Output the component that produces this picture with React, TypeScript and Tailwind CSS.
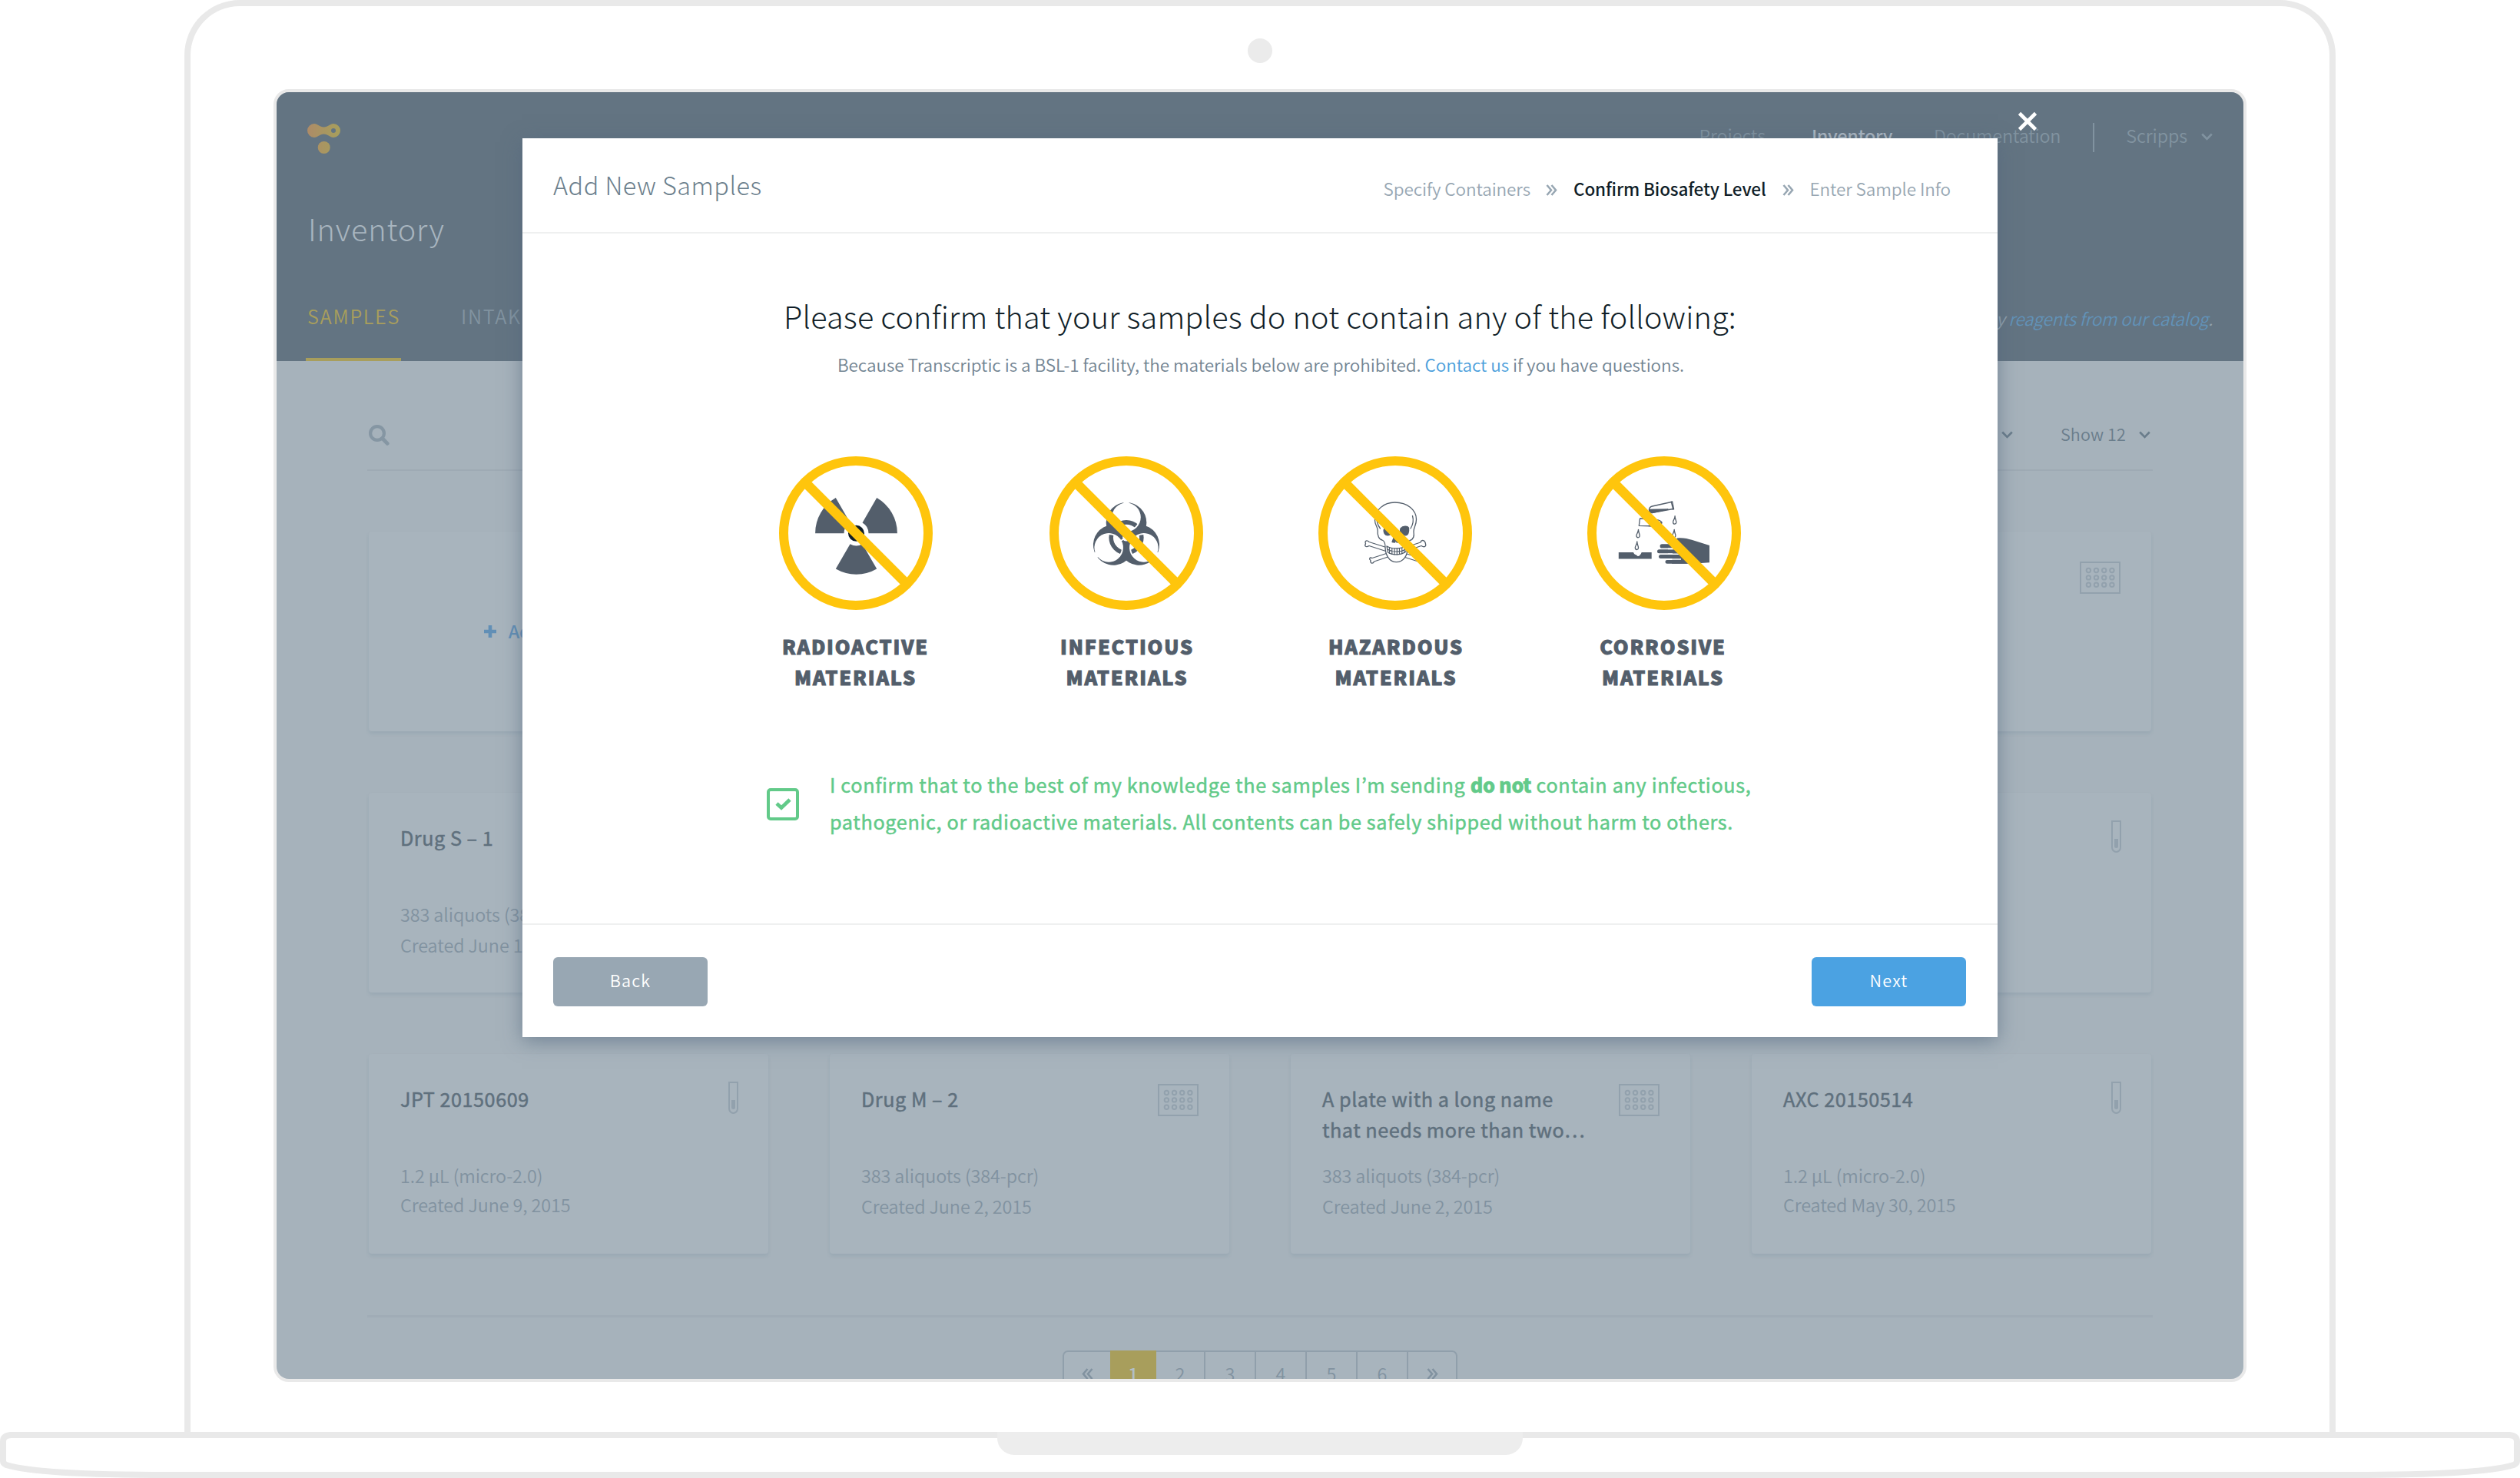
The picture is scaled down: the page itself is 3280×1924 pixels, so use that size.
import type { ReactNode } from "react";

const INK = "#535e6b";

function Logo() {
  return (
    <svg className="h-[40px] w-[44px]" viewBox="0 0 44 40">
      <defs>
        <linearGradient id="logo" gradientUnits="userSpaceOnUse" x1="0" y1="0" x2="44" y2="0">
          <stop offset="0" stopColor="#ad8b68" />
          <stop offset="0.5" stopColor="#a99661" />
          <stop offset="1" stopColor="#a79f5c" />
        </linearGradient>
      </defs>
      <path
        fill="url(#logo)"
        fillRule="evenodd"
        d="M9 1C13.500 1 16 5.500 21.500 5.500S29.500 1 34 1A9 9 0 0 1 34 19C29.500 19 27 14.500 21.500 14.500S13.500 19 9 19A9 9 0 0 1 9 1ZM34 7A3 3 0 1 0 34 13A3 3 0 1 0 34 7Z"
      />
      <circle cx="21.700" cy="32" r="8" fill="url(#logo)" />
    </svg>
  );
}

function ChevronDown({ className }: { className: string }) {
  return (
    <svg className={className} viewBox="0 0 15 10" fill="none" stroke="currentColor" strokeWidth="2.600">
      <path d="M1.200 1.500L7.500 8L13.800 1.500" />
    </svg>
  );
}

function DoubleChevron({ className }: { className: string }) {
  return (
    <svg className={className} viewBox="0 0 15 15" fill="none" stroke="currentColor" strokeWidth="2.600">
      <path d="M1.500 1L7 7.500L1.500 14M7.500 1L13 7.500L7.500 14" />
    </svg>
  );
}

function SearchIcon() {
  return (
    <svg className="mt-[4px] h-[27px] w-[27px] text-[#8596a3]" viewBox="0 0 27 27" fill="none" stroke="currentColor">
      <circle cx="11" cy="11" r="8.900" strokeWidth="4.200" />
      <path d="M18 18L24.200 24.400" strokeWidth="4.800" strokeLinecap="round" />
    </svg>
  );
}

function PlateIcon() {
  return (
    <svg className="mt-[39px] h-[42px] w-[53px] shrink-0 text-[#92a1ad]" viewBox="0 0 53 42" fill="none" stroke="currentColor" strokeWidth="2">
      <rect x="1" y="1" width="51" height="40" />
      {[11.5, 20.9, 30.2].map((y) =>
        [11.4, 21.5, 31.7, 41.9].map((x) => <circle key={`${x}-${y}`} cx={x} cy={y} r="2.700" />),
      )}
    </svg>
  );
}

function TubeIcon() {
  return (
    <svg className="mt-[36px] mr-[-2px] h-[42px] w-[14px] shrink-0 text-[#92a1ad]" viewBox="0 0 14 42">
      <path d="M1 1H12V35A5.500 6 0 0 1 1 35Z" fill="none" stroke="currentColor" strokeWidth="2" />
      <path d="M4 24H9V33.500A2.500 2.500 0 0 1 4 33.500Z" fill="currentColor" />
    </svg>
  );
}

function Radioactive() {
  return (
    <g transform="translate(100.500 100.300)">
      {[0, 120, 240].map((a) => (
        <path key={a} transform={`rotate(${a})`} fill={INK} d="M-8 13.860L-26.700 46.250A53.400 53.400 0 0 0 26.700 46.250L8 13.860A16 16 0 0 1 -8 13.860Z" />
      ))}
      <circle r="10.500" fill="#101e28" />
    </g>
  );
}

function Biohazard() {
  const turns = [0, 120, 240];
  return (
    <g transform="translate(100 105.700) scale(1.755)">
      <defs>
        <mask id="lobes" maskUnits="userSpaceOnUse" x="-30" y="-30" width="60" height="60">
          {turns.map((a) => (
            <circle key={a} transform={`rotate(${a})`} cy="-11" r="15" fill="white" />
          ))}
          {turns.map((a) => (
            <g key={a} transform={`rotate(${a})`} fill="black">
              <circle cy="-15" r="10.700" />
              <rect x="-2" y="-27" width="4" height="6" />
              <rect x="-0.500" y="-6" width="1" height="6" />
            </g>
          ))}
          <circle r="2.800" fill="black" />
        </mask>
        <mask id="ring" maskUnits="userSpaceOnUse" x="-30" y="-30" width="60" height="60">
          {turns.map((a) => (
            <circle key={a} transform={`rotate(${a})`} cy="-15" r="9.600" fill="white" />
          ))}
        </mask>
      </defs>
      <rect x="-30" y="-30" width="60" height="60" fill={INK} mask="url(#lobes)" />
      <circle r="11.300" fill="none" stroke={INK} strokeWidth="3.200" mask="url(#ring)" />
    </g>
  );
}

function Skull() {
  return (
    <g fill="white" stroke={INK} strokeWidth="1.300" strokeLinejoin="round" strokeLinecap="round">
      <path d="M66 116.500C62 119 59.500 117 61.500 113.800C60 110 63 108.500 66 111.500L134 133C138 131.500 140 134 137.500 136.500C138.500 139.500 135 140.500 133 138L66 116.500Z" />
      <path d="M70 132.500C66.500 131 65.500 133.500 68 135.500C67 139.500 71 140.500 72.500 137L134 116.500C138 119 140.500 117.500 139.500 114C139 109 134 108 133 112L70 132.500Z" />
      <path d="M99.500 60C85 60 73.500 70 73.500 83C73.500 90 77.500 92 77.200 97C76.500 103 79 108.500 83 109C86 110 87 113 87 118C87 128 92 137.700 101.500 137.700C111 137.700 116 129 116 120C116 114 115.500 111 119 109.500C123.500 108.500 125 104 124 98C124 92 127.500 90 127.500 82C127.500 70 116 60 99.500 60Z" />
      <path fill="none" d="M122.500 77.500C124.500 84 123 89 120 94M76.500 80C75.500 86 77.500 90 80.500 94" />
      <path fill={INK} d="M86 94C89 92.500 94.500 94 95 98C95.500 102 91 103.500 88 102.500C85 101 84.500 96 86 94Z" />
      <path fill={INK} d="M107 94C110 90.500 116 90.500 117.500 93C118 98 117 102.500 113.500 102.800C109 103 105.500 99 107 94Z" />
      <path fill={INK} d="M98.500 105L96 111.500L99.500 112L100.500 109.500L102 112L105.500 111.500L103 105Z" />
      <path d="M89 117C96 121 107 121 115 116.500L114 124C107 129 96 129 90.500 125Z" />
      <path fill="none" strokeWidth="1.200" d="M90 121.200C97 125 107 125 114.500 120.700M92.500 118.500V126.500M95.800 119.500V127.300M99 120V128M102.300 120V128M105.500 119.800V127.500M108.800 119.200V126.700M112 118V125" />
    </g>
  );
}

function Corrosive() {
  return (
    <g fill="none" stroke={INK} strokeWidth="1.300" strokeLinejoin="round">
      <path d="M109.400 59.500L111.500 68.500L84 73.500C79.500 73 79 66.500 84.500 65Z" />
      <path d="M108.600 59.300L110.600 59L112.600 68.800L110.600 69.200" />
      <path fill={INK} d="M80.500 69.500L105 69L84 73.500C82 73.200 81 72 80.500 69.500Z" />
      <path d="M68.500 81L67.300 90.300L90 91C98 91 99 84.500 92 82.800Z" />
      <path fill={INK} d="M80 90.500L97 86C96 90 93 91 90 91Z" />
      {[
        [113.6, 77.7],
        [112.7, 95.3],
        [66, 95.3],
        [64.3, 111],
      ].map(([x, y]) => (
        <path key={`${x}-${y}`} transform={`translate(${x} ${y})`} d="M0.500 0C0.500 4 -2 5.500 -2 8C-2 11.300 2.200 11.300 2.200 8C2.200 5.500 0.500 4 0.500 0Z" />
      ))}
      <g fill={INK} stroke="none">
        <path d="M40.800 125H60C61 128.500 64 127.500 65.500 130C67.500 130.500 69.500 128 70.700 125H83.700V133.500H40.800Z" />
        <path d="M117 106.500C124 105.500 131 107.500 136 108.700L159 116V138.300L137 139.700H110L112 112Z" />
        <rect x="94.600" y="114.300" width="32" height="5.200" rx="2.600" />
        <rect x="91" y="121.300" width="34" height="5" rx="2.500" />
        <rect x="93" y="128" width="34" height="5" rx="2.500" />
        <rect x="101.500" y="135" width="30" height="4.800" rx="2.400" />
      </g>
      <path stroke="white" strokeWidth="1.600" d="M105 120.400H120M105 127.200H120M105 134H122" />
    </g>
  );
}

function Prohibited({ children }: { children: ReactNode }) {
  return (
    <svg className="h-[200px] w-[200px]" viewBox="0 0 200 200">
      {children}
      <g fill="none" stroke="#ffc50c" strokeWidth="12">
        <circle cx="100" cy="100" r="94" />
        <path d="M34 34L166 166" strokeWidth="12.500" />
      </g>
    </svg>
  );
}

type Sample = { title: string; amount: string; created: string; kind: "plate" | "tube" | "none" };

function SampleCard({ title, amount, created, kind }: Sample) {
  return (
    <div className="flex justify-between rounded-[4px] bg-[#a8b4bd] pr-[40px] pl-[41px] shadow-[0_3px_4px_rgba(110,135,155,0.22)]">
      <div className="w-[360px] pt-[38px] whitespace-pre-line">
        <h3 className="h-[100px] text-[25.2px] leading-[40px] font-normal tracking-[0.53px] text-[#5f707d] [-webkit-text-stroke:0.5px_#5f707d]">{title}</h3>
        <div className={kind === "tube" ? "mt-px text-[23.4px] leading-[38px] font-[350] tracking-[-0.12px] text-[#8192a0]" : "text-[23.4px] leading-[40px] font-[350] tracking-[-0.1px] text-[#8192a0]"}>
          <p>{amount}</p>
          <p>{created}</p>
        </div>
      </div>
      {kind === "plate" && <PlateIcon />}
      {kind === "tube" && <TubeIcon />}
    </div>
  );
}

const samples: Sample[] = [
  { title: "", amount: "", created: "", kind: "none" },
  { title: "", amount: "", created: "", kind: "none" },
  { title: "", amount: "", created: "", kind: "plate" },
  { title: "Drug S – 1", amount: "383 aliquots (384-pcr)", created: "Created June 19, 2015", kind: "none" },
  { title: "", amount: "", created: "", kind: "none" },
  { title: "", amount: "", created: "", kind: "none" },
  { title: "", amount: "", created: "", kind: "tube" },
  { title: "JPT 20150609", amount: "1.2 µL (micro-2.0)", created: "Created June 9, 2015", kind: "tube" },
  { title: "Drug M – 2", amount: "383 aliquots (384-pcr)", created: "Created June 2, 2015", kind: "plate" },
  { title: "A plate with a long name\nthat needs more than two…", amount: "383 aliquots (384-pcr)", created: "Created June 2, 2015", kind: "plate" },
  { title: "AXC 20150514", amount: "1.2 µL (micro-2.0)", created: "Created May 30, 2015", kind: "tube" },
];

function Header() {
  return (
    <header className="h-[350px] bg-[#637482] px-[40px] pt-[40px] font-light">
      <nav className="flex h-[38px] items-start justify-between text-[23.4px] leading-[32px] font-[350] tracking-[-0.1px] text-[#8193a0]">
        <Logo />
        <div className="flex">
          <span>Projects</span>
          <span className="ml-[60px] font-medium tracking-[-0.35px] text-[#aebac4]">Inventory</span>
          <span className="ml-[54px] tracking-[-0.25px]">Documentation</span>
          <span className="ml-[42px] h-[38px] w-[2px] bg-[#8193a0]" />
          <span className="ml-[41px]">Scripps</span>
          <ChevronDown className="mt-[13px] ml-[18px] h-[10px] w-[15px]" />
        </div>
      </nav>
      <h1 className="mt-[75px] pl-px text-[39.6px] leading-[48px] tracking-[0.83px] text-[#a8b5bf]">Inventory</h1>
      <div className="mt-[70px] flex h-[79px] justify-between">
        <div className="-ml-[2px] flex gap-[76px] text-[25.2px] leading-[40px] font-[350] tracking-[1.7px]">
          <span className="h-[79px] w-[124px] border-b-4 border-[#a89e5c] px-[2px] text-[#a89e5c]">SAMPLES</span>
          <span className="px-[2px] text-[#8193a0]">INTAKE</span>
        </div>
        <p className="pt-[5px] text-[22.5px] leading-[36px] font-[350] tracking-[-0.24px] text-[#92a2ae] italic">
          Buy <span className="text-[#6292b8]">reagents from our catalog</span>.
        </p>
      </div>
    </header>
  );
}

function Pagination() {
  return (
    <div className="mx-auto mt-[43px] flex h-[70px] w-[514px] rounded-[7px] border-2 border-[#909fab] bg-[#a8b4bd] text-center text-[23.4px] leading-[57px] font-[350] text-[#8192a0]">
      <span className="flex w-[60px] justify-center pt-[21px]">
        <DoubleChevron className="h-[15px] w-[15px] rotate-180" />
      </span>
      <span className="-mt-[2px] w-[60px] bg-[#a89e5c] pt-[2px] font-medium text-[#b2bec6]">1</span>
      <span className="w-[64px] border-r-2 border-[#909fab]">2</span>
      {["3", "4", "5", "6"].map((n) => (
        <span key={n} className="w-[66px] border-r-2 border-[#909fab]">
          {n}
        </span>
      ))}
      <span className="flex w-[62px] justify-center pt-[21px]">
        <DoubleChevron className="h-[15px] w-[15px]" />
      </span>
    </div>
  );
}

function Inventory() {
  return (
    <main>
      <div className="mx-[118px] flex h-[143px] items-start justify-between border-b-2 border-[#9eaab4] pt-[79px] pr-[3px] pl-[2px] text-[21.6px] leading-[32px] font-[350] text-[#6a7d8b]">
        <SearchIcon />
        <div className="flex tracking-[0.1px]">
          <ChevronDown className="mt-[12px] h-[10px] w-[15px]" />
          <span className="ml-[62px]">Show 12</span>
          <ChevronDown className="mt-[12px] ml-[17px] h-[10px] w-[15px]" />
        </div>
      </div>
      <div className="mt-[79px] grid auto-rows-[260px] grid-cols-4 gap-[80px] px-[120px]">
        <div className="flex items-center justify-center gap-[16px] rounded-[4px] bg-[#a8b4bd] pb-px pl-[10px] text-[23.4px] font-medium tracking-[-0.1px] text-[#618fb6] shadow-[0_3px_4px_rgba(110,135,155,0.22)]">
          <svg className="h-[16px] w-[16px]" viewBox="0 0 16 16">
            <path d="M5.700 0H10.300V5.700H16V10.300H10.300V16H5.700V10.300H0V5.700H5.700Z" fill="currentColor" />
          </svg>
          Add New Samples
        </div>
        {samples.map((s, i) => (
          <SampleCard key={i} {...s} />
        ))}
      </div>
      <div className="mx-[118px] mt-[80px] h-[3px] bg-[#a0acb6]" />
      <Pagination />
    </main>
  );
}

const hazards = [
  { name: "RADIOACTIVE", icon: <Radioactive />, col: "mr-[2px] w-[200px]", label: "pr-[1px]" },
  { name: "INFECTIOUS", icon: <Biohazard />, col: "w-[200px]", label: "pl-[2px]" },
  { name: "HAZARDOUS", icon: <Skull />, col: "w-[200px]", label: "pl-[2px]" },
  { name: "CORROSIVE", icon: <Corrosive />, col: "w-[200px]", label: "pr-[3px]" },
];

function Modal() {
  return (
    <section className="absolute top-[60px] left-[320px] flex h-[1170px] w-[1920px] flex-col bg-white shadow-[0_5px_24px_rgba(80,102,124,0.62)]">
      <svg className="absolute -top-[35px] right-[-52px] h-[26px] w-[26px]" viewBox="0 0 26 26">
        <path d="M2.500 2.500L23.500 23.500M23.500 2.500L2.500 23.500" stroke="white" strokeWidth="4.600" />
      </svg>
      <header className="flex h-[124px] justify-between border-b-2 border-[#eff0f0] pt-[40px] pr-[61px] pl-[40px] font-light">
        <h2 className="text-[32.4px] leading-[40px] tracking-[0.5px] text-[#6c7f8d]">Add New Samples</h2>
        <div className="flex pt-[9px] text-[22.5px] leading-[32px] font-[350] tracking-[-0.1px] text-[#98a7b3]">
          <span>Specify Containers</span>
          <DoubleChevron className="mt-[11px] ml-[20px] h-[15px] w-[15px]" />
          <span className="ml-[21px] font-medium tracking-[-0.15px] text-[#101e28]">Confirm Biosafety Level</span>
          <DoubleChevron className="mt-[11px] ml-[21px] h-[15px] w-[15px]" />
          <span className="ml-[21px]">Enter Sample Info</span>
        </div>
      </header>
      <h3 className="mt-[79px] text-center text-[39.6px] leading-[56px] font-light tracking-[0.19px] text-[#101e28]">
        Please confirm that your samples do not contain any of the following:
      </h3>
      <p className="mt-[19px] pl-[2px] text-center text-[22.5px] leading-[32px] font-[350] tracking-[-0.06px] text-[#738593]">
        Because Transcriptic is a BSL-1 facility, the materials below are prohibited. <span className="text-[#4b9fdc]">Contact us</span> if you have questions.
      </p>
      <div className="mt-[104px] flex justify-center gap-[150px]">
        {hazards.map((h) => (
          <div key={h.name} className={h.col}>
            <Prohibited>{h.icon}</Prohibited>
            <div className={h.label}>
              <p className="mt-[27px] text-center text-[25.2px] leading-[40px] font-black tracking-[1.85px] text-[#535e6b] [-webkit-text-stroke:1px_#535e6b]">
                {h.name}
                <br />
                MATERIALS
              </p>
            </div>
          </div>
        ))}
      </div>
      <div className="mt-[96px] flex gap-[40px] pl-[318px] text-[25.2px] leading-[48px] font-normal text-[#62ca89]">
        <span className="mt-[29px] flex h-[42px] w-[42px] items-center justify-center rounded-[5px] border-4 border-current">
          <svg className="mt-[-2px] h-[17px] w-[21px]" viewBox="0 0 21 17">
            <path d="M2 8L8 13.500L19 3" fill="none" stroke="currentColor" strokeWidth="4.800" />
          </svg>
        </span>
        <p className="tracking-[0.66px] [-webkit-text-stroke:0.5px_#62ca89]">
          I confirm that to the best of my knowledge the samples I’m sending <b className="font-black tracking-[-0.3px]">do not</b> contain any infectious,
          <br />
          pathogenic, or radioactive materials. All contents can be safely shipped without harm to others.
        </p>
      </div>
      <footer className="mt-auto flex h-[148px] items-start justify-between border-t-2 border-[#eff0f0] pt-[42px] pr-[41px] pl-[40px] text-center text-[21.6px] leading-[56px] font-[350] tracking-[1.2px] text-white">
        <button className="h-[64px] w-[201px] rounded-[6px] bg-[#98a7b3] pb-[4px]">Back</button>
        <button className="h-[64px] w-[201px] rounded-[6px] bg-[#4ba2e2] pb-[4px]">Next</button>
      </footer>
    </section>
  );
}

export default function App() {
  return (
    <div className="h-[1924px] w-[3280px] overflow-hidden bg-white font-['Noto_Sans_CJK_KR','Open_Sans',sans-serif]">
      <div className="mx-auto flex h-[1864px] w-[2800px] flex-col items-center rounded-t-[72px] border-8 border-b-0 border-[#e9e9e9]">
        <div className="flex h-[108px] items-center pt-[8px]">
          <span className="h-[32px] w-[32px] rounded-full bg-[#ebebeb]" />
        </div>
        <div className="h-[1683px] w-[2568px] rounded-[20px] border-4 border-[#e9e9e9] bg-[#e9e9e9]">
          <div className="relative h-full overflow-hidden rounded-[16px] bg-[#a6b2bb]">
            <Header />
            <Inventory />
            <Modal />
          </div>
        </div>
      </div>
      <div className="relative h-[60px]">
        <svg className="absolute inset-0 h-[60px] w-[3280px]" viewBox="0 0 3280 60" fill="none" stroke="#e9e9e9" strokeWidth="8">
          <path d="M14 4H3266Q3276 5 3276 12V38Q3276 41 3272 43C3240 53 3160 56 3060 56H220C120 56 40 53 8 43Q4 41 4 38V12Q4 5 14 4Z" />
        </svg>
        <div className="relative mx-auto h-[30px] w-[684px] rounded-b-[22px] bg-[#ededed]" />
      </div>
    </div>
  );
}
